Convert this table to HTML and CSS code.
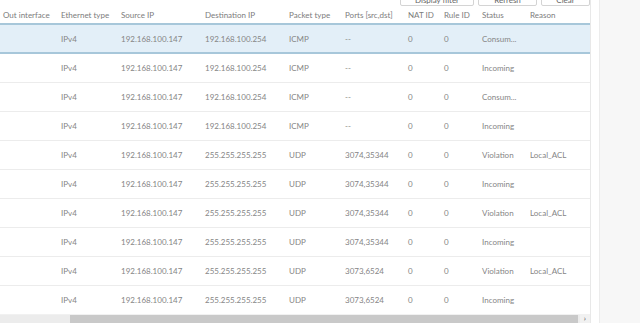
FILE: index.html
```html
<!DOCTYPE html>
<html lang="en">
<head>
    <meta charset="UTF-8">
    <title>Packet capture</title>
    <link rel="stylesheet" href="styles.css">
</head>
<body>

<div class="layout">
    <div class="main">
        <div class="toolbar">
            <button class="btn btn-filter">Display filter</button>
            <button class="btn btn-refresh">Refresh</button>
            <button class="btn btn-clear">Clear</button>
        </div>
        <div class="grid-wrap">
            <table class="grid">
                <colgroup>
                    <col style="width:58px"><col style="width:60px"><col style="width:84px"><col style="width:84px">
                    <col style="width:56px"><col style="width:63px"><col style="width:36px"><col style="width:38px">
                    <col style="width:48px"><col style="width:63px">
                </colgroup>
                <thead>
                    <tr>
                        <th>Out interface</th><th>Ethernet type</th><th>Source IP</th><th>Destination IP</th>
                        <th>Packet type</th><th>Ports [src,dst]</th><th>NAT ID</th><th>Rule ID</th><th>Status</th><th>Reason</th>
                    </tr>
                </thead>
                <tbody>
                    <tr class="selected"><td></td><td>IPv4</td><td>192.168.100.147</td><td>192.168.100.254</td><td>ICMP</td><td>--</td><td>0</td><td>0</td><td>Consum...</td><td></td></tr>
                    <tr><td></td><td>IPv4</td><td>192.168.100.147</td><td>192.168.100.254</td><td>ICMP</td><td>--</td><td>0</td><td>0</td><td>Incoming</td><td></td></tr>
                    <tr><td></td><td>IPv4</td><td>192.168.100.147</td><td>192.168.100.254</td><td>ICMP</td><td>--</td><td>0</td><td>0</td><td>Consum...</td><td></td></tr>
                    <tr><td></td><td>IPv4</td><td>192.168.100.147</td><td>192.168.100.254</td><td>ICMP</td><td>--</td><td>0</td><td>0</td><td>Incoming</td><td></td></tr>
                    <tr><td></td><td>IPv4</td><td>192.168.100.147</td><td>255.255.255.255</td><td>UDP</td><td>3074,35344</td><td>0</td><td>0</td><td>Violation</td><td>Local_ACL</td></tr>
                    <tr><td></td><td>IPv4</td><td>192.168.100.147</td><td>255.255.255.255</td><td>UDP</td><td>3074,35344</td><td>0</td><td>0</td><td>Incoming</td><td></td></tr>
                    <tr><td></td><td>IPv4</td><td>192.168.100.147</td><td>255.255.255.255</td><td>UDP</td><td>3074,35344</td><td>0</td><td>0</td><td>Violation</td><td>Local_ACL</td></tr>
                    <tr><td></td><td>IPv4</td><td>192.168.100.147</td><td>255.255.255.255</td><td>UDP</td><td>3074,35344</td><td>0</td><td>0</td><td>Incoming</td><td></td></tr>
                    <tr><td></td><td>IPv4</td><td>192.168.100.147</td><td>255.255.255.255</td><td>UDP</td><td>3073,6524</td><td>0</td><td>0</td><td>Violation</td><td>Local_ACL</td></tr>
                    <tr><td></td><td>IPv4</td><td>192.168.100.147</td><td>255.255.255.255</td><td>UDP</td><td>3073,6524</td><td>0</td><td>0</td><td>Incoming</td><td></td></tr>
                </tbody>
            </table>
        </div>
        <div class="hscroll">
            <div class="hscroll-track">
                <div class="hscroll-thumb"></div>
            </div>
            <div class="hscroll-arrow">&rsaquo;</div>
        </div>
    </div>
    <div class="side"></div>
</div>

</body>
</html>
```

FILE: styles.css
```css
body {
    margin: 0;
    padding: 0;
    font-family: 'Lato', 'Open Sans', sans-serif;
    font-size: 8px;
    color: #858585;
    background: #fff;
    overflow: hidden;
}
.layout {
    display: flex;
    height: 323px;
}
.main {
    width: 590px;
    border-right: 1px solid #e8e8e8;
    display: flex;
    flex-direction: column;
}
.side {
    margin-left: 8px;
    flex: 1;
    background: #f7f7f7;
    border-left: 1px solid #ececec;
}
.toolbar {
    display: flex;
    justify-content: flex-end;
    gap: 4px;
    margin-top: -16px;
    height: 22px;
}
.btn {
    height: 22px;
    border: 1px solid #d4d4d4;
    border-radius: 2px;
    background: #fff;
    font-family: inherit;
    font-size: 8px;
    line-height: 8px;
    color: #666;
    padding: 9px 0 0 0;
    overflow: hidden;
}
.btn-filter { width: 74px; }
.btn-refresh { width: 59px; }
.btn-clear { width: 49px; }
.grid-wrap {
    flex: 1;
    overflow: hidden;
}
.grid {
    width: 590px;
    table-layout: fixed;
    border-collapse: collapse;
}
.grid th {
    text-align: left;
    font-weight: normal;
    color: #7c7c7c;
    height: 17px;
    padding: 0 0 0 3px;
    border-bottom: 2px solid #a7c7da;
    white-space: nowrap;
    overflow: hidden;
    vertical-align: middle;
}
.grid td {
    height: 28px;
    padding: 0 0 0 3px;
    border-bottom: 1px solid #ececec;
    white-space: nowrap;
    overflow: hidden;
}
.grid tr.selected td {
    background: #e3eff8;
    border-bottom: 2px solid #a7c7da;
    height: 27px;
}
.hscroll {
    display: flex;
    align-items: center;
    height: 9px;
    background: #f1f1f1;
}
.hscroll-track {
    flex: 1;
    height: 8px;
    background: #ececec;
}
.hscroll-thumb {
    margin-left: 70px;
    margin-right: 2px;
    height: 8px;
    background: #c9c9c9;
}
.hscroll-arrow {
    width: 10px;
    text-align: center;
    font-size: 8px;
    line-height: 9px;
    color: #555;
}
```
